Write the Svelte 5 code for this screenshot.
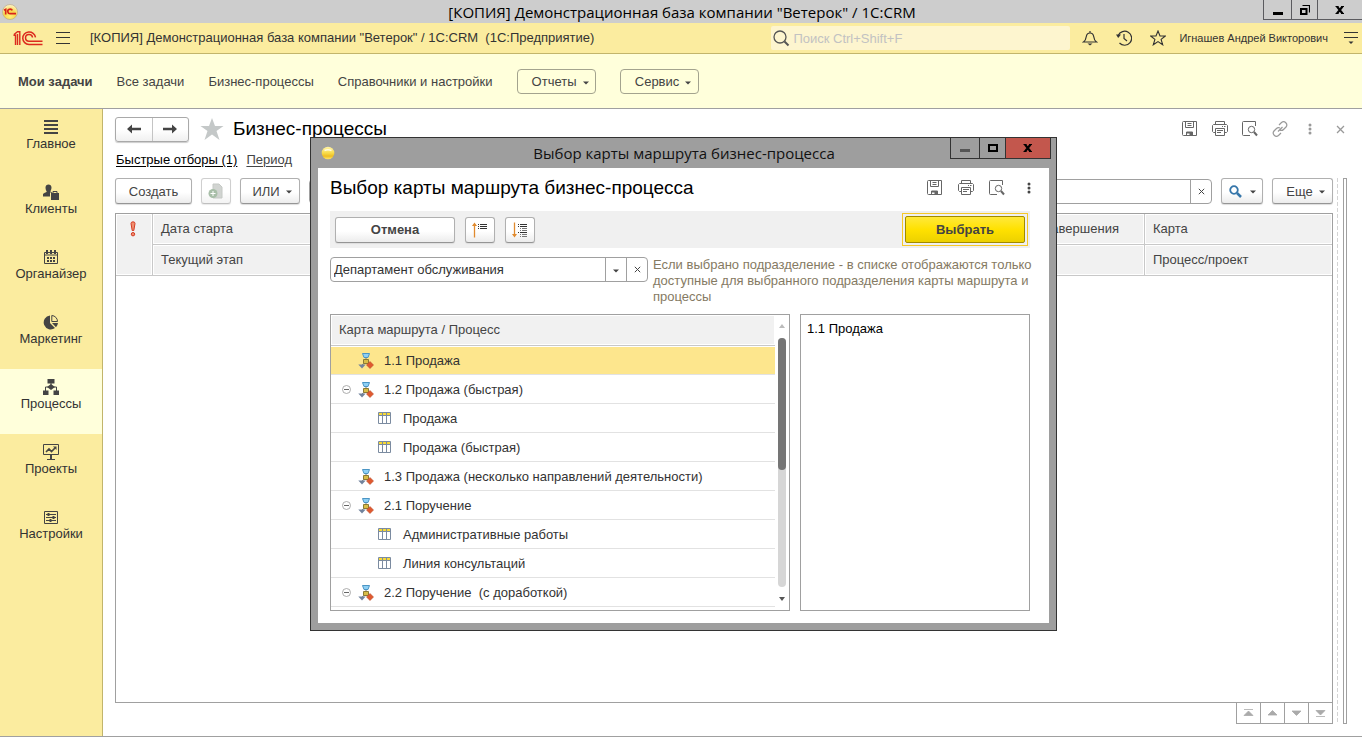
<script>
  const sections = [
    { label: 'Главное', icon: 'lines' },
    { label: 'Клиенты', icon: 'clients' },
    { label: 'Органайзер', icon: 'calendar' },
    { label: 'Маркетинг', icon: 'pie' },
    { label: 'Процессы', icon: 'process', active: true },
    { label: 'Проекты', icon: 'board' },
    { label: 'Настройки', icon: 'sliders' }
  ];

  const links = ['Мои задачи', 'Все задачи', 'Бизнес-процессы', 'Справочники и настройки'];

  const rows = [
    { text: '1.1 Продажа', kind: 'map', selected: true },
    { text: '1.2 Продажа (быстрая)', kind: 'map', open: true },
    { text: 'Продажа', kind: 'process' },
    { text: 'Продажа (быстрая)', kind: 'process' },
    { text: '1.3 Продажа (несколько направлений деятельности)', kind: 'map' },
    { text: '2.1 Поручение', kind: 'map', open: true },
    { text: 'Административные работы', kind: 'process' },
    { text: 'Линия консультаций', kind: 'process' },
    { text: '2.2 Поручение \u00a0(с доработкой)', kind: 'map', open: true }
  ];

  const pager = [
    { label: 'В начало', d: 'M2 1.5h9M6.5 3 2 7.5h9z' },
    { label: 'Вверх', d: 'M6.5 2.5 2 7h9z' },
    { label: 'Вниз', d: 'M6.5 7.5 2 3h9z' },
    { label: 'В конец', d: 'M2 8.5h9M6.5 7 2 2.5h9z' }
  ];

  let department = $state('Департамент обслуживания');
  let note = $state('1.1 Продажа');
</script>

{#snippet caret()}
  <svg class="caret" width="6" height="4" viewBox="0 0 6 4" aria-hidden="true"><path d="M0 .5h6L3 3.5z" fill="currentColor" /></svg>
{/snippet}

{#snippet windowTools()}
  <button class="tool" aria-label="Сохранить">
    <svg width="16" height="16" viewBox="0 0 16 16" fill="none" stroke="#666">
      <path d="M.5 1.5q0-1 1-1h13v14h-13q-1 0-1-1zM3.500 .5v6h8v-6M5.500 2.500h4M5.500 4.500h4" />
      <path d="M4.500 14.500v-3.500h6v3.500" /><path d="M5 11h5v3.500H7.500v-2H5z" fill="#666" stroke="none" />
    </svg>
  </button>
  <button class="tool" aria-label="Печать">
    <svg width="16" height="16" viewBox="0 0 16 16" fill="none" stroke="#666">
      <path d="M3.500 3.500v-3h9v3M3.500 11.500h-2l-1-1v-6l1-1h13l1 1v6l-1 1h-2M3.500 7.500h9v7h-9zM5 9.500h6M5 11.500h4M10 5.500h1M12 5.500h1.500" />
    </svg>
  </button>
  <button class="tool" aria-label="Просмотр">
    <svg width="16" height="16" viewBox="0 0 16 16" fill="none" stroke="#666">
      <path d="M8 14.500H1.500q-1 0-1-1v-12q0-1 1-1h12V5" /><circle cx="9.500" cy="8.500" r="3.200" /><path d="m12 11 3 3.500" stroke-width="2" />
    </svg>
  </button>
{/snippet}

{#snippet dots()}
  <svg width="4" height="12" viewBox="0 0 4 12" fill="currentColor" aria-hidden="true">
    <circle cx="2" cy="2" r="1.500" /><circle cx="2" cy="6" r="1.500" /><circle cx="2" cy="10" r="1.500" />
  </svg>
{/snippet}

{#snippet cross(size)}
  <svg width={size} height={size} viewBox="0 0 7 7" stroke="currentColor" aria-hidden="true"><path d="m.8.8 5.400 5.400m0-5.400L.8 6.200" /></svg>
{/snippet}

<div class="page">
  <header class="titlebar">
    <svg class="app-icon" width="16" height="16" viewBox="0 0 16 16" aria-hidden="true">
      <defs><radialGradient id="ball" cx=".5" cy=".8" r=".8"><stop offset="0" stop-color="#fff07a" /><stop offset=".5" stop-color="#f7d648" /><stop offset="1" stop-color="#fff6d0" /></radialGradient></defs>
      <circle cx="8" cy="8" r="7.500" fill="url(#ball)" stroke="#b9a98a" stroke-width=".7" />
      <path d="M2 6.300 3.700 5.300V10.500" fill="none" stroke="#d8231c" stroke-width="1.600" />
      <path d="M10.300 6.300A2.400 2.300 0 1 0 8.300 9.700H14" fill="none" stroke="#d8231c" stroke-width="1.700" />
    </svg>
    <span class="title">[КОПИЯ] Демонстрационная база компании "Ветерок" / 1C:CRM</span>
    <div class="winbtns">
      <button class="min" aria-label="Свернуть"><svg width="10" height="10" viewBox="0 0 10 10"><path d="M0 7h10v3H0z" /></svg></button>
      <button class="max" aria-label="Восстановить"><svg width="10" height="10" viewBox="0 0 10 10" fill="none" stroke="#000"><path d="M1 4h5.500v5H1z" stroke-width="2" /><path d="M2.500 .5h7v7" stroke-width="1.200" /></svg></button>
      <button class="close" aria-label="Закрыть"><svg width="10" height="8" viewBox="0 0 10 8" stroke="#000" stroke-width="2.200"><path d="m2 .5 5.500 7m0-7L2 7.500" /><path d="M.5 .5h3M6 .5h3M.5 7.500h3M6 7.500h3" stroke-width="1" /></svg></button>
    </div>
  </header>

  <div class="appbar">
    <svg width="30" height="15" viewBox="0 0 30 15" fill="none" stroke="#dc2a1e" stroke-width="1.500" role="img" aria-label="1С">
      <path d="M.5 4.200h2V14M1 3.500 4.500.8H6.800V14M4.500 3v11" stroke-width="1.400" />
      <path d="M22.500 6.300A6.400 6.200 0 1 0 16 13.400H29.500M19.500 6.500A3.500 3.300 0 1 0 16 10.200H29.500" />
    </svg>
    <button class="burger" aria-label="Меню"><svg width="14" height="12" viewBox="0 0 14 12" stroke="#333"><path d="M0 .5h14M0 5.500h14M0 11.500h14" /></svg></button>
    <span class="apptitle">[КОПИЯ] Демонстрационная база компании "Ветерок" / 1C:CRM &nbsp;(1С:Предприятие)</span>
    <label class="search">
      <svg width="17" height="17" viewBox="0 0 17 17" fill="none" stroke="#555"><circle cx="7" cy="7" r="6" stroke-width="1.300" /><path d="m11.500 11.500 4 4" stroke-width="2" /></svg>
      <input type="search" placeholder="Поиск Ctrl+Shift+F" aria-label="Поиск" />
    </label>
    <div class="appicons">
      <button aria-label="Оповещения"><svg width="16" height="16" viewBox="0 0 16 16" fill="none" stroke="#333"><path d="M1.500 12h13c-2-1.500-2.500-3-2.800-5.500C11.300 4 10.200 3 8 3S4.700 4 4.300 6.500C4 9 3.500 10.500 1.500 12zM8 3V1" stroke-width="1.200" /><path d="M5.500 13.500h5L8 15.500z" fill="#333" stroke="none" /></svg></button>
      <button aria-label="История"><svg width="16" height="16" viewBox="0 0 16 16" fill="none" stroke="#333" stroke-width="1.200"><path d="M2.200 5.500A7 7 0 1 1 3.500 13M8 4v4.500l3 2.500" /><path d="M0 4.500h5L2.200 8z" fill="#333" stroke="none" /></svg></button>
      <button aria-label="Избранное"><svg width="16" height="16" viewBox="0 0 16 16" fill="none" stroke="#333" stroke-width="1.100"><path d="m8 1 2 5h5.300l-4.200 3.400 1.600 5.400L8 11.600l-4.700 3.200 1.600-5.400L.7 6H6z" /></svg></button>
    </div>
    <a class="user" href="#user">Игнашев Андрей Викторович</a>
    <button class="service" aria-label="Сервис и настройки"><svg width="14" height="14" viewBox="0 0 14 14" stroke="#333"><path d="M0 1.500h14M0 6.500h14" /><path d="M4.500 10.500h5L7 13z" fill="#333" stroke="none" /></svg></button>
  </div>

  <nav class="subnav">
    {#each links as link, i}
      <a href="#s{i}" class:current={i === 0}>{link}</a>
    {/each}
    <button class="menu">Отчеты {@render caret()}</button>
    <button class="menu">Сервис {@render caret()}</button>
  </nav>

  <div class="body">
    <nav class="sidebar">
      {#each sections as s}
        <a href="#{s.icon}" class:active={s.active}>
          <svg width="16" height="16" viewBox="0 0 16 16" fill="none" stroke="#444" aria-hidden="true">
            {#if s.icon === 'lines'}
              <path d="M1 2h14M1 6h14M1 10h14M1 14h14" stroke-width="2" />
            {:else if s.icon === 'clients'}
              <path d="M2.500 3.500C2.500 1.500 3.800 .5 5.500 .5S8.500 1.500 8.500 3.500 7.500 7 7.300 7.500l1.700 1V12.500H0v-2C0 9 3.500 8.500 3.800 7.500 3 6.500 2.500 5 2.500 3.500zM8 9h8v7H8z" fill="#444" stroke="none" /><path d="M10 9V7.500h4V9" /><path d="M7.500 8.500v4.500" stroke="#fbec9f" />
            {:else if s.icon === 'calendar'}
              <path d="M1.500 3.500h13v11h-13zM1 6h14" /><path d="M4 1v4M8 1v4M12 1v4" stroke-width="2" /><path d="M4 9h2M7 9h2M10 9h2M4 12h2M7 12h2M10 12h2" stroke-width="2" />
            {:else if s.icon === 'pie'}
              <path d="M7 1.500V9l5 5A7 7 0 1 1 7 1.500z" fill="#444" stroke="none" /><path d="M9 9h6a7 7 0 0 1-2 4.200z" fill="#444" stroke="none" /><path d="M8.800 1.500a6 6 0 0 1 5.700 6H8.800z" />
            {:else if s.icon === 'process'}
              <path d="M4.500 0h7v4.500h-7zM0 11.500h5.500V16H0zM10.500 11.500H16V16h-5.500zM8 5 12 8 8 11 4 8z" fill="#444" stroke="none" /><path d="M8 4v2M5 8H2.500v4M11 8h2.500v4" />
            {:else if s.icon === 'board'}
              <path d="M.5 .5h15v10H.5zM4 15.500h8" /><path d="M8 11v4" stroke-width="2" /><path d="m3 8 3-3 2.500 2.500L12 4" stroke-width="1.600" /><path d="M10 2.500h3.500V6z" fill="#444" stroke="none" />
            {:else}
              <path d="M1.500 2.500h13v12h-13zM3 5.500h10M3 8.500h10M3 11.500h10" /><path d="M5.500 4v3M10.500 7v3M7.500 10v3" stroke-width="2" />
            {/if}
          </svg>
          <span>{s.label}</span>
        </a>
      {/each}
    </nav>

    <main>
      <div class="pagehead">
        <div class="history">
          <button aria-label="Назад"><svg width="14" height="10" viewBox="0 0 14 10"><path d="M0 5 5 .5v3.300h9v2.400H5v3.300z" fill="#444" /></svg></button>
          <button aria-label="Вперед"><svg width="14" height="10" viewBox="0 0 14 10"><path d="m14 5-5-4.500v3.300H0v2.400h9v3.300z" fill="#444" /></svg></button>
        </div>
        <svg class="fav" width="24" height="22" viewBox="0 0 24 22" aria-hidden="true"><path d="m12 0 3 8h8.500l-7 5 3 9-7.500-5.500L4.500 22l3-9-7-5H9z" fill="#c4c8c8" /></svg>
        <h1>Бизнес-процессы</h1>
        <div class="pagetools">
          {@render windowTools()}
          <button class="tool pale" aria-label="Ссылка"><svg width="16" height="16" viewBox="0 0 16 16" fill="none" stroke="currentColor" stroke-width="1.200"><path d="m7 4 2.500-2.500a3.200 3.200 0 0 1 4.500 4.500L11.500 8.500a3 3 0 0 1-3.500.6M9 12l-2.500 2.500A3.200 3.200 0 0 1 2 10l2.500-2.500A3 3 0 0 1 8 7M6 10.500 10.500 6" /></svg></button>
          <button class="tool pale" aria-label="Еще">{@render dots()}</button>
          <button class="tool pale" aria-label="Закрыть форму">{@render cross(9)}</button>
        </div>
      </div>

      <div class="filters"><a class="strong" href="#filters">Быстрые отборы (1)</a><a href="#period">Период</a></div>

      <div class="content">
        <div class="left">
          <div class="commands">
            <button class="btn create">Создать</button>
            <button class="btn icon disabled" aria-label="Скопировать"><svg width="16" height="16" viewBox="0 0 16 16"><path d="M5 1h6l3 3v11H5z" fill="#b3b9b3" stroke="#a0a6a0" /><circle cx="5" cy="10.500" r="4.500" fill="#6f946f" /><path d="M5 8v5M2.500 10.500h5" stroke="#fff" /></svg></button>
            <button class="btn or">ИЛИ {@render caret()}</button>
            <div class="find">
              <input type="text" aria-label="Поиск в списке" />
              <button aria-label="Очистить поиск">{@render cross(7)}</button>
            </div>
            <button class="btn lens" aria-label="Найти"><svg width="13" height="13" viewBox="0 0 13 13" fill="none" stroke="#3676aa"><circle cx="5" cy="5" r="3.800" stroke-width="1.800" /><path d="m8 8 4 4" stroke-width="2.500" /></svg> {@render caret()}</button>
            <button class="btn more">Еще {@render caret()}</button>
          </div>

          <div class="grid">
            <table>
              <colgroup><col class="c1" /><col /><col class="c3" /><col class="c4" /></colgroup>
              <thead>
                <tr>
                  <th rowspan="2" class="mark"><svg width="6" height="16" viewBox="0 0 6 16" fill="#f0906f" stroke="#d43a25" aria-label="Важность"><path d="M1 2.500Q1 .8 3 .8T5 2.500L3.800 9.500H2.200z" /><circle cx="3" cy="13.200" r="1.700" /></svg></th>
                  <th>Дата старта</th><th>Дата завершения</th><th>Карта</th>
                </tr>
                <tr><th>Текущий этап</th><th></th><th>Процесс/проект</th></tr>
              </thead>
            </table>
          </div>
          <div class="pager">
            {#each pager as p}
              <button aria-label={p.label}><svg width="13" height="10" viewBox="0 0 13 10" fill="#aaa" stroke="#aaa" stroke-width=".8"><path d={p.d} /></svg></button>
            {/each}
          </div>
        </div>
        <div class="splitter"></div>
        <div class="panel"></div>
      </div>
    </main>
  </div>

  <div class="dialog" role="dialog" aria-labelledby="dlg-title">
    <div class="dlgbar">
      <svg class="ball" width="14" height="14" viewBox="0 0 14 14" aria-hidden="true">
        <defs><linearGradient id="gold" x2="0" y2="1"><stop offset="0" stop-color="#fff3a8" /><stop offset=".5" stop-color="#f8dc4a" /><stop offset=".75" stop-color="#eebd22" /><stop offset="1" stop-color="#ffe76a" /></linearGradient></defs>
        <circle cx="7" cy="7" r="6.300" fill="url(#gold)" /><path d="M3.500 4.500q3.500-1.500 7 0" fill="none" stroke="#fffbe0" stroke-width="1.500" />
      </svg>
      <span>Выбор карты маршрута бизнес-процесса</span>
      <div class="winbtns">
        <button class="min" aria-label="Свернуть окно"><svg width="10" height="10" viewBox="0 0 10 10"><path d="M0 6h10v3H0z" fill="#555" /></svg></button>
        <button class="max" aria-label="Развернуть окно"><svg width="10" height="8" viewBox="0 0 10 8"><path d="M1 1h8v6H1z" fill="none" stroke="#000" stroke-width="2" /></svg></button>
        <button class="close red" aria-label="Закрыть окно"><svg width="10" height="8" viewBox="0 0 10 8" stroke="#000" stroke-width="2.200"><path d="m2 .5 5.500 7m0-7L2 7.500" /><path d="M.5 .5h3M6 .5h3M.5 7.500h3M6 7.500h3" stroke-width="1" /></svg></button>
      </div>
    </div>
    <div class="dlgbody">
      <div class="dlghead">
        <h2 id="dlg-title">Выбор карты маршрута бизнес-процесса</h2>
        {@render windowTools()}
        <button class="tool last" aria-label="Еще команды">{@render dots()}</button>
      </div>
      <div class="dlgcmd">
        <button class="btn cancel">Отмена</button>
        <button class="btn icon" aria-label="Свернуть все"><svg width="16" height="16" viewBox="0 0 16 16" fill="none"><path d="M2.500 15.500V2" stroke="#e08a2e" stroke-width="1.300" /><path d="M0 4 2.500 .5 5 4z" fill="#e08a2e" /><path d="M6 2.500h1M8 2.500h7M6 4.500h1M8 4.500h7M6 6.500h1M8 6.500h7" stroke="#333" /></svg></button>
        <button class="btn icon" aria-label="Развернуть все"><svg width="16" height="16" viewBox="0 0 16 16" fill="none"><path d="M2.500 .5V14" stroke="#e08a2e" stroke-width="1.300" /><path d="M0 12 2.500 15.500 5 12z" fill="#e08a2e" /><path d="M6 2.500h1M8 2.500h7M6 4.500h1M8 4.500h7M6 10.500h1M8 10.500h7" stroke="#333" /><path d="M8 6.500h1M10 6.500h5M8 8.500h1M10 8.500h5M8 12.500h1M10 12.500h5M8 14.500h1M10 14.500h5" stroke="#777" /></svg></button>
        <div class="primary"><button>Выбрать</button></div>
      </div>
      <div class="dept">
        <div class="combo">
          <input type="text" bind:value={department} aria-label="Подразделение" />
          <button aria-label="Выбрать подразделение">{@render caret()}</button>
          <button aria-label="Очистить">{@render cross(7)}</button>
        </div>
        <p>Если выбрано подразделение - в списке отображаются только доступные для выбранного подразделения карты маршрута и процессы</p>
      </div>
      <div class="panes">
        <div class="tree">
          <table>
            <thead><tr><th><span>Карта маршрута / Процесс</span></th></tr></thead>
            <tbody>
              {#each rows as r}
                <tr class:selected={r.selected}>
                  <td>
                    <div class="row {r.kind}">
                      {#if r.kind === 'map'}
                        <span class="toggle">
                          {#if r.open}
                            <button aria-label="Свернуть"><svg width="9" height="9" viewBox="0 0 9 9" fill="none" stroke="#999"><circle cx="4.500" cy="4.500" r="4" stroke-width=".8" /><path d="M2 4.500h5" stroke="#666" /></svg></button>
                          {/if}
                        </span>
                        <svg width="16" height="16" viewBox="0 0 16 16" aria-hidden="true">
                          <path d="M8 4v4M8 9 4 12M8 9l4 3" stroke="#777" fill="none" />
                          <path d="M4.500 .5h7L10 4.500H6z" fill="#8ed0f5" stroke="#4b95c4" />
                          <path d="M5.500 6.500h5v4h-5z" fill="#d9bd47" stroke="#8b7a35" />
                          <path d="M.3 11.500h7.400L4 15.500z" fill="#71829c" />
                          <path d="M12 8.500 15.500 12 12 15.500 8.500 12z" fill="#e0592f" stroke="#b8492a" stroke-width=".6" />
                        </svg>
                      {:else}
                        <svg width="14" height="13" viewBox="0 0 14 13" aria-hidden="true">
                          <path d="M1 1h12v2.500H1z" fill="#f7d936" /><path d="M.5 .5h12v11H.5zM1 3.500h11M4.500 1v10.500M8.500 1v10.500" fill="none" stroke="#7b8ba0" />
                        </svg>
                      {/if}
                      <span>{r.text}</span>
                    </div>
                  </td>
                </tr>
              {/each}
            </tbody>
          </table>
          <div class="scroll">
            <svg width="6" height="4" viewBox="0 0 6 4"><path d="M3 0 6 4H0z" fill="#bbb" /></svg>
            <div class="track"><div class="thumb"></div></div>
            <svg width="6" height="4" viewBox="0 0 6 4"><path d="M3 4 6 0H0z" fill="#555" /></svg>
          </div>
        </div>
        <textarea aria-label="Описание" bind:value={note}></textarea>
      </div>
    </div>
  </div>
</div>

<style>
  :global(body) { margin: 0; background: #fff; }
  .page, .page :is(button, input, textarea) { font-family: "Liberation Sans", Arial, sans-serif; font-size: 13px; }
  .page { position: relative; min-height: 100vh; display: flex; flex-direction: column; color: #444; box-sizing: border-box; border-bottom: 1px solid #a0a0a0; line-height: 16px; }
  .page * { box-sizing: border-box; }
  button { display: flex; align-items: center; justify-content: center; padding: 0; border: 0; background: none; color: #444; }
  input, textarea { border: 0; outline: 0; padding: 0; background: none; min-width: 0; }
  a { color: inherit; text-decoration: none; white-space: nowrap; }
  svg { flex: none; display: block; }
  h1, h2 { margin: 0; font-weight: 400; font-size: 19px; line-height: 24px; color: #000; white-space: nowrap; }
  .caret { margin-top: 2px; }

  .titlebar { display: flex; height: 23px; background: #cdcdcd; color: #000; align-items: center; padding-left: 2px; }
  .title { flex: 1; text-align: center; font-family: "Open Sans", sans-serif; font-size: 15px; line-height: 22px; padding-left: 83px; }
  .winbtns { display: flex; align-self: flex-start; height: 20px; border: 1px solid #5b5b5f; border-width: 0 0 1px 1px; }
  .winbtns button + button { border-left: 1px solid #5b5b5f; }
  .winbtns .min { width: 27px; }
  .winbtns .max { width: 26px; }
  .winbtns .close { width: 45px; }

  .appbar { display: flex; align-items: center; height: 31px; background: #fbec9f; border-bottom: 1px solid #c2b56b; padding: 0 4px 0 13px; color: #333; }
  .burger { margin: 0 20px 0 13px; }
  .apptitle { flex: 1; white-space: nowrap; }
  .search { display: flex; align-items: center; gap: 3px; width: 299px; height: 24px; padding-left: 2px; background: #fdf5cf; border-radius: 2px; }
  .search input { flex: 1; }
  .search input::placeholder { color: #c2c2c2; opacity: 1; }
  .appicons { display: flex; gap: 18px; padding: 0 13px 0 12px; }
  .user { font-size: 11px; margin-right: 16px; }

  .subnav { display: flex; align-items: center; gap: 24px; height: 55px; padding: 1px 18px 0; background: #ffffdb; border-bottom: 1px solid #a0a0a0; }
  .current { font-weight: 700; }
  .menu { width: 79px; height: 25px; gap: 6px; border: 1px solid #a3a38e; border-radius: 4px; padding-left: 8px; }

  .body { display: flex; flex: 1; }
  .sidebar { width: 103px; background: #fbec9f; border-right: 1px solid #c2b56b; color: #333; }
  .sidebar a { display: flex; flex-direction: column; align-items: center; gap: 1px; height: 65px; padding-top: 10px; }
  .sidebar .active { background: #ffffdb; }

  main { flex: 1; display: flex; flex-direction: column; padding: 7px 15px 12px 12px; min-width: 0; }
  .pagehead { display: flex; align-items: center; height: 26px; }
  .history { display: flex; width: 74px; height: 25px; border: 1px solid #a9a9a9; border-radius: 3px; box-shadow: 0 1px 1px #ccc; background: linear-gradient(#fff 50%, #f0f0f0); }
  .history button { flex: 1; }
  .history button + button { border-left: 1px solid #c4c4c4; }
  .fav { margin: 0 9px 0 11px; }
  .pagetools { display: flex; margin-left: auto; margin-right: -5px; gap: 6px; }
  .tool { width: 24px; height: 24px; }
  .pale { color: #999; }
  .filters { display: flex; gap: 9px; padding: 10px 1px; }
  .filters a { text-decoration: underline; text-underline-offset: 2px; }
  .filters .strong { color: #000; }

  .content { flex: 1; display: flex; }
  .left { flex: 1; display: flex; flex-direction: column; min-width: 0; }
  .commands { display: flex; height: 26px; margin-bottom: 9px; }
  .btn { height: 26px; gap: 6px; border: 1px solid #b0b0b0; border-bottom-color: #959595; border-radius: 3px; box-shadow: 0 1px 1px #ddd; background: linear-gradient(#fff 55%, #ececec); white-space: nowrap; }
  .icon { width: 30px; }
  .create { width: 77px; margin-right: 9px; }
  .disabled { opacity: .6; margin-right: 9px; }
  .or { width: 60px; margin-right: 9px; padding-left: 4px; }
  .find { flex: 1; display: flex; height: 25px; margin: 1px 9px 0 0; border: 1px solid #a0a0a0; border-radius: 4px; }
  .find input { flex: 1; }
  .find button { width: 21px; border-left: 1px solid #a0a0a0; }
  .lens { width: 42px; gap: 8px; margin-right: 9px; }
  .more { width: 61px; padding-left: 6px; }

  .grid { flex: 1; border: 1px solid #a0a0a0; }
  table { width: 100%; border-collapse: separate; border-spacing: 0; table-layout: fixed; }
  .c1 { width: 37px; }
  .c3 { width: 140px; }
  .c4 { width: 187px; }
  .grid th { height: 31px; padding: 0 8px; text-align: left; font-weight: 400; background: #f1f1f1; background-clip: padding-box; border-right: 1px solid #c8c8c8; border-bottom: 1px solid #c8c8c8; box-shadow: inset 0 0 0 1px #fff; }
  .grid th:last-child { border-right: 0; }
  .grid .mark { vertical-align: top; padding: 7px 14px; }
  .pager { align-self: flex-end; display: flex; height: 21px; border: 1px solid #a0a0a0; border-width: 0 1px 1px 0; }
  .pager button { width: 24px; border-left: 1px solid #a0a0a0; }
  .splitter { width: 1px; margin: 0 5px 0 4px; background: repeating-linear-gradient(#d4d4d4 0 4px, transparent 4px 6px); }
  .panel { width: 4px; border: 1px solid #a0a0a0; }

  /* Floating window over the list form */
  .dialog { position: absolute; left: 310px; top: 137px; width: 747px; background: #9e9e9e; border: 1px solid #333; padding: 0 7px 7px; }
  .dlgbar { display: flex; align-items: center; height: 30px; margin-right: -2px; color: #111; font-family: "Open Sans", sans-serif; font-size: 15px; }
  .dlgbar > span { flex: 1; text-align: center; padding-left: 83px; }
  .ball { margin-left: 3px; }
  .dlgbar .winbtns { height: 21px; border-color: #333; border-right-width: 1px; }
  .dlgbar .winbtns button { border-color: #333; }
  .dlgbar .winbtns .min { width: 28px; }
  .red { background: #c3574d; }
  .dlgbody { background: #fff; padding: 8px 19px 12px 12px; }
  .dlghead { display: flex; align-items: center; height: 24px; margin-bottom: 11px; gap: 7px; }
  h2 { flex: 1; }
  .dlghead .last { width: 14px; margin-left: 6px; margin-right: -6px; }
  .dlgcmd { display: flex; align-items: center; height: 37px; background: #f0f0f0; padding: 0 2px 0 5px; gap: 10px; }
  .cancel { width: 120px; font-weight: 700; }
  .primary { margin-left: auto; border: 1px solid #f5c827; padding: 2px; }
  .primary button { width: 120px; height: 27px; font-weight: 700; border: 1px solid #a08a00; border-radius: 2px; background: linear-gradient(#ffe93b, #ffe100 50%, #ecd100); }
  .dept { display: flex; align-items: flex-start; gap: 5px; height: 57px; margin-top: 9px; }
  .combo { display: flex; width: 318px; height: 25px; border: 1px solid #a0a0a0; border-radius: 4px; }
  .combo input { flex: 1; padding-left: 3px; color: #333; }
  .combo button { width: 21px; border-left: 1px solid #a0a0a0; }
  .dept p { flex: 1; margin: 0 -12px 0 0; color: #857a63; }
  .panes { display: flex; gap: 10px; height: 297px; }
  .tree { width: 460px; display: flex; border: 1px solid #a0a0a0; overflow: hidden; }
  .tree table { flex: 1; height: 0; }
  .tree th { padding: 1px 1px 1px; border-bottom: 1px solid #c8c8c8; font-weight: 400; text-align: left; height: 31px; }
  .tree th span { display: block; background: #f1f1f1; padding: 6px 7px; }
  .tree td { height: 29px; padding: 1px 0 0; border-bottom: 1px solid #e2e2e2; }
  .row { display: flex; align-items: center; height: 27px; color: #333; white-space: nowrap; }
  .selected .row { background: #fde68d; }
  .map { padding-left: 11px; gap: 10px; }
  .toggle { width: 9px; margin-right: -3px; }
  .process { padding-left: 47px; gap: 11px; }
  .scroll { width: 14px; display: flex; flex-direction: column; align-items: center; padding: 9px 0; gap: 10px; }
  .track { flex: 1; width: 8px; border-radius: 4px; background: #d6d6d6; }
  .thumb { height: 53%; border-radius: 4px; background: #757575; }
  textarea { flex: 1; border: 1px solid #a0a0a0; resize: none; padding: 6px; color: #000; line-height: 16px; }
</style>
